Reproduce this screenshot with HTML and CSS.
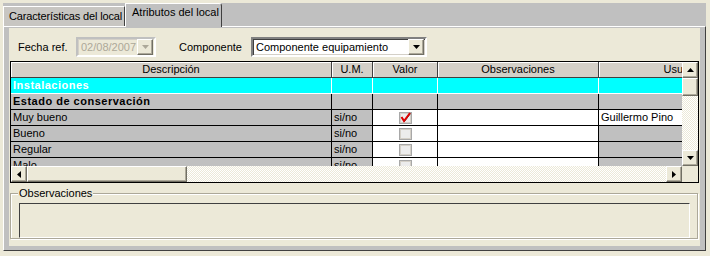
FILE: index.html
```html
<!DOCTYPE html>
<html lang="es">
<head>
    <meta charset="UTF-8">
    <title>Atributos del local</title>
    <link rel="stylesheet" href="styles.css">
</head>
<body>
    <div class="tabctl">
        <div class="tabstrip">
            <div class="tab tab-first">Características del local</div>
            <div class="tab tab-active">Atributos del local</div>
        </div>
        <div class="page">
            <div class="pane">
                <div class="filters">
                    <span class="lbl lbl-fecha">Fecha ref.</span>
                    <div class="combo combo-date disabled">
                        <span class="combo-text">02/08/2007</span>
                        <span class="sb-btn combo-btn"><svg width="7" height="4"><polygon points="0,0 7,0 3.5,4" fill="#aca899"/></svg></span>
                    </div>
                    <span class="lbl lbl-comp">Componente</span>
                    <div class="combo combo-comp">
                        <span class="combo-text">Componente equipamiento</span>
                        <span class="sb-btn combo-btn"><svg width="7" height="4"><polygon points="0,0 7,0 3.5,4" fill="#000"/></svg></span>
                    </div>
                </div>

                <div class="grid">
                    <div class="grid-top">
                        <div class="cells">
                            <div class="rows">
                                <div class="c h">Descripción</div>
                                <div class="c h">U.M.</div>
                                <div class="c h">Valor</div>
                                <div class="c h">Observaciones</div>
                                <div class="c h">Usuario</div>

                                <div class="c sel">Instalaciones</div>
                                <div class="c sel"></div>
                                <div class="c sel"></div>
                                <div class="c sel"></div>
                                <div class="c sel"></div>

                                <div class="c b">Estado de conservación</div>
                                <div class="c"></div>
                                <div class="c"></div>
                                <div class="c"></div>
                                <div class="c"></div>

                                <div class="c">Muy bueno</div>
                                <div class="c">si/no</div>
                                <div class="c w chk"><svg width="13" height="12"><rect x="0.5" y="0.5" width="12" height="11" fill="#d4d0c8" stroke="#a8a8a8"/><rect x="2" y="2" width="9" height="8" fill="#ececec"/><path d="M3 5.5 L5.5 9.5 L11.5 1.5" stroke="#404040" stroke-width="1" fill="none"/><path d="M2.5 5 L5 9 L11 1" stroke="#e00000" stroke-width="2" fill="none"/></svg></div>
                                <div class="c w"></div>
                                <div class="c w">Guillermo Pino</div>

                                <div class="c">Bueno</div>
                                <div class="c">si/no</div>
                                <div class="c w chk"><svg width="13" height="12"><rect x="0.5" y="0.5" width="12" height="11" fill="#d4d0c8" stroke="#a8a8a8"/><rect x="2" y="2" width="9" height="8" fill="#ececec"/></svg></div>
                                <div class="c w"></div>
                                <div class="c"></div>

                                <div class="c">Regular</div>
                                <div class="c">si/no</div>
                                <div class="c w chk"><svg width="13" height="12"><rect x="0.5" y="0.5" width="12" height="11" fill="#d4d0c8" stroke="#a8a8a8"/><rect x="2" y="2" width="9" height="8" fill="#ececec"/></svg></div>
                                <div class="c w"></div>
                                <div class="c"></div>

                                <div class="c">Malo</div>
                                <div class="c">si/no</div>
                                <div class="c w chk"><svg width="13" height="12"><rect x="0.5" y="0.5" width="12" height="11" fill="#d4d0c8" stroke="#a8a8a8"/><rect x="2" y="2" width="9" height="8" fill="#ececec"/></svg></div>
                                <div class="c w"></div>
                                <div class="c"></div>
                            </div>
                        </div>
                        <div class="vscroll">
                            <span class="sb-btn"><svg width="7" height="4"><polygon points="0,4 3.5,0 7,4" fill="#000"/></svg></span>
                            <span class="sb-btn thumb-v"></span>
                            <span class="track"></span>
                            <span class="sb-btn"><svg width="7" height="4"><polygon points="0,0 7,0 3.5,4" fill="#000"/></svg></span>
                        </div>
                    </div>
                    <div class="grid-bottom">
                        <div class="hscroll">
                            <span class="sb-btn"><svg width="4" height="7"><polygon points="4,0 4,7 0,3.5" fill="#000"/></svg></span>
                            <span class="sb-btn thumb-h"></span>
                            <span class="track"></span>
                            <span class="sb-btn"><svg width="4" height="7"><polygon points="0,0 0,7 4,3.5" fill="#000"/></svg></span>
                        </div>
                        <div class="corner"></div>
                    </div>
                </div>

                <fieldset class="obs">
                    <legend>Observaciones</legend>
                    <div class="obs-box"></div>
                </fieldset>
            </div>
        </div>
    </div>
</body>
</html>
```

FILE: styles.css
```css
* {
    box-sizing: border-box;
}
body {
    margin: 0;
    background: #ece9d8;
    font-family: "Liberation Sans", Arial, sans-serif;
    font-size: 11px;
    color: #000;
}
.tabctl {
    width: 703px;
    margin: 3px 0 0 3px;
}
.tabstrip {
    display: flex;
    align-items: flex-end;
    height: 23px;
    background: #c0c0c0;
}
.tab {
    height: 20px;
    padding: 3px 0 0 5px;
    background: #c8c6c2;
    border-top: 1px solid #fff;
    border-left: 1px solid #fff;
    border-right: 1px solid #404040;
    white-space: nowrap;
    overflow: hidden;
}
.tab-first {
    width: 122px;
    letter-spacing: -0.15px;
}
.tab-active {
    width: 97px;
    height: 24px;
    margin-bottom: -1px;
    padding: 2px 0 0 6px;
    background: #c0c0c0;
    border-top-right-radius: 3px;
    position: relative;
    z-index: 1;
}
.page {
    border: 1px solid;
    border-color: #fff #404040 #404040 #fff;
    background: #c0c0c0;
    padding: 1px 5px 4px;
}
.pane {
    height: 218px;
    padding-top: 9px;
    background: #ece9d8;
}
.filters {
    display: flex;
    align-items: center;
    height: 20px;
    padding-left: 9px;
}
.lbl-fecha {
    width: 58px;
}
.lbl-comp {
    width: 72px;
    margin-left: 23px;
}
.combo {
    display: flex;
    align-items: center;
    height: 20px;
    border: 2px solid;
    border-color: #808080 #fff #fff #808080;
    box-shadow: inset 1px 1px 0 #404040, inset -1px -1px 0 #d4d0c8;
    background: #fff;
}
.combo-date {
    width: 80px;
}
.combo-comp {
    width: 176px;
}
.combo.disabled {
    border-color: #c0c0c0 #fff #fff #c0c0c0;
    box-shadow: inset 1px 1px 0 #d4d0c8;
    background: #ece9d8;
    color: #aca899;
}
.combo-text {
    flex: 1;
    padding-left: 3px;
    white-space: nowrap;
}
.combo-btn {
    margin-right: 1px;
}
.sb-btn {
    display: flex;
    align-items: center;
    justify-content: center;
    width: 16px;
    height: 16px;
    flex: none;
    background: #ece9d8;
    border: 1px solid;
    border-color: #fff #716f64 #716f64 #fff;
    box-shadow: inset -1px -1px 0 #aca899;
}
.grid {
    width: 689px;
    margin: 4px 0 0 1px;
    border: 1px solid #000;
}
.grid-top {
    display: flex;
    height: 104px;
}
.cells {
    width: 671px;
    overflow: hidden;
}
.rows {
    display: grid;
    grid-template-columns: 321px 41px 65px 161px 168px;
    grid-auto-rows: 16px;
    width: 756px;
}
.c {
    padding: 0 2px;
    line-height: 15px;
    white-space: nowrap;
    overflow: hidden;
    background: #c0c0c0;
    border-right: 1px solid #000;
    border-bottom: 1px solid #000;
}
.h {
    text-align: center;
    background: #d4d0c8;
    border-color: #404040;
    box-shadow: inset 1px 1px 0 #fff;
}
.sel {
    background: #0ff;
    color: #fff;
    font-weight: bold;
    letter-spacing: 0.5px;
    border-color: #fff;
}
.b {
    font-weight: bold;
    letter-spacing: 0.5px;
}
.w {
    background: #fff;
}
.chk {
    display: flex;
    align-items: center;
    justify-content: center;
}
.track {
    flex: 1;
}
.vscroll {
    display: flex;
    flex-direction: column;
    width: 16px;
    background: repeating-conic-gradient(#fff 0 25%, #ece9d8 0 50%) 0 0 / 2px 2px;
}
.thumb-v {
    height: 18px;
}
.grid-bottom {
    display: flex;
    height: 16px;
}
.hscroll {
    display: flex;
    width: 671px;
    background: repeating-conic-gradient(#fff 0 25%, #ece9d8 0 50%) 0 0 / 2px 2px;
}
.thumb-h {
    width: 160px;
}
.corner {
    width: 16px;
    background: #ece9d8;
}
.obs {
    width: 688px;
    margin: 4px 0 0 1px;
    padding: 0 7px 0 8px;
    border: 1px solid #aca899;
    box-shadow: inset 1px 1px 0 #fff, 1px 1px 0 #fff;
}
.obs legend {
    padding: 0 1px;
    margin-left: -1px;
    line-height: 12px;
    background: #ece9d8;
}
.obs-box {
    width: 671px;
    height: 35px;
    margin-top: 4px;
    border: 1px solid;
    border-color: #404040 #fff #fff #404040;
}
```
